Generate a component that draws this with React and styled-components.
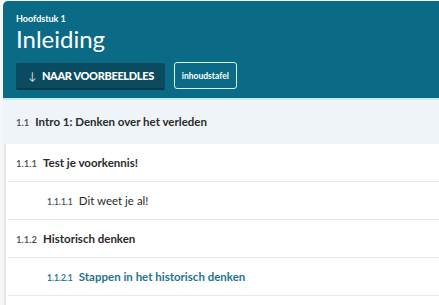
import { styled, createGlobalStyle } from "styled-components";

const GlobalStyle = createGlobalStyle`
  html, body {
    margin: 0;
    background: #f4f6f7;
    font-family: Lato, "Open Sans", sans-serif;
  }
`;

const Page = styled.div`
  padding: 1px 0 0 3px;
  width: 436px;
  height: 304px;
  overflow: hidden;
`;

const Header = styled.header`
  background: #0b6a86;
  border-radius: 5px 0 0 0;
  padding: 12px 13px 9px;
  color: #fff;
  border-bottom: 2px solid #c6ecf6;
`;

const Kicker = styled.div`
  font-size: 9px;
  font-weight: 700;
  line-height: 11px;
`;

const Title = styled.h1`
  margin: 1px 0 0;
  font-size: 24px;
  font-weight: 400;
  line-height: 28px;
`;

const Actions = styled.div`
  display: flex;
  align-items: center;
  gap: 9px;
  margin-top: 9px;
`;

const PrimaryButton = styled.button`
  display: flex;
  align-items: center;
  gap: 6px;
  height: 25px;
  padding: 0 11px 0 12px;
  border: 0;
  border-radius: 2px;
  background: #0b4b60;
  box-shadow: 0 2px 0 #083a4a;
  color: #fff;
  font-family: inherit;
  font-size: 11px;
  font-weight: 900;
  letter-spacing: -0.35px;
`;

const Arrow = styled.span`
  font-size: 11px;
  font-weight: 400;
  opacity: 0.8;
`;

const OutlineButton = styled.button`
  height: 27px;
  padding: 0 7px;
  border: 1.5px solid #d6f1f8;
  border-radius: 3px;
  background: transparent;
  color: #fff;
  font-family: inherit;
  font-size: 8.5px;
  font-weight: 700;
`;

const SectionRow = styled.div`
  display: flex;
  align-items: baseline;
  gap: 6px;
  height: 44px;
  padding: 0 13px;
  line-height: 44px;
  background: #eef4f8;
`;

const List = styled.div`
  background: #fff;
  border-left: 2px solid #e6e6e6;
  margin-left: 1px;
`;

const Row = styled.div`
  display: flex;
  align-items: baseline;
  gap: 6px;
  height: 37px;
  line-height: 37px;
  margin-left: 2px;
  padding-left: ${(p) => (p.$level > 2 ? 39 : 8)}px;
  border-bottom: 1px solid #e9e9e9;
`;

const Num = styled.span`
  font-size: ${(p) => (p.$small ? 8.5 : 9.5)}px;
  font-weight: ${(p) => (p.$active ? 700 : 600)};
  color: ${(p) => (p.$active ? "#2a7893" : "#4a4a4a")};
`;

const Label = styled.span`
  font-size: ${(p) => (p.$small ? 10.5 : 11.5)}px;
  font-weight: ${(p) => (p.$bold ? 700 : 400)};
  color: ${(p) => (p.$active ? "#1f7491" : "#2b2b2b")};
`;

const items = [
  { num: "1.1.1", label: "Test je voorkennis!", level: 2 },
  { num: "1.1.1.1", label: "Dit weet je al!", level: 3 },
  { num: "1.1.2", label: "Historisch denken", level: 2 },
  { num: "1.1.2.1", label: "Stappen in het historisch denken", level: 3, active: true },
  { num: "", label: "", level: 3 },
];

export default function App() {
  return (
    <Page>
      <GlobalStyle />
      <Header>
        <Kicker>Hoofdstuk 1</Kicker>
        <Title>Inleiding</Title>
        <Actions>
          <PrimaryButton>
            <Arrow>↓</Arrow>
            NAAR VOORBEELDLES
          </PrimaryButton>
          <OutlineButton>inhoudstafel</OutlineButton>
        </Actions>
      </Header>
      <SectionRow>
        <Num>1.1</Num>
        <Label $bold>Intro 1: Denken over het verleden</Label>
      </SectionRow>
      <List>
        {items.map((it, i) => (
          <Row key={i} $level={it.level}>
            <Num $small={it.level > 2} $active={it.active}>
              {it.num}
            </Num>
            <Label $bold={it.level === 2 || it.active} $active={it.active}>
              {it.label}
            </Label>
          </Row>
        ))}
      </List>
    </Page>
  );
}
